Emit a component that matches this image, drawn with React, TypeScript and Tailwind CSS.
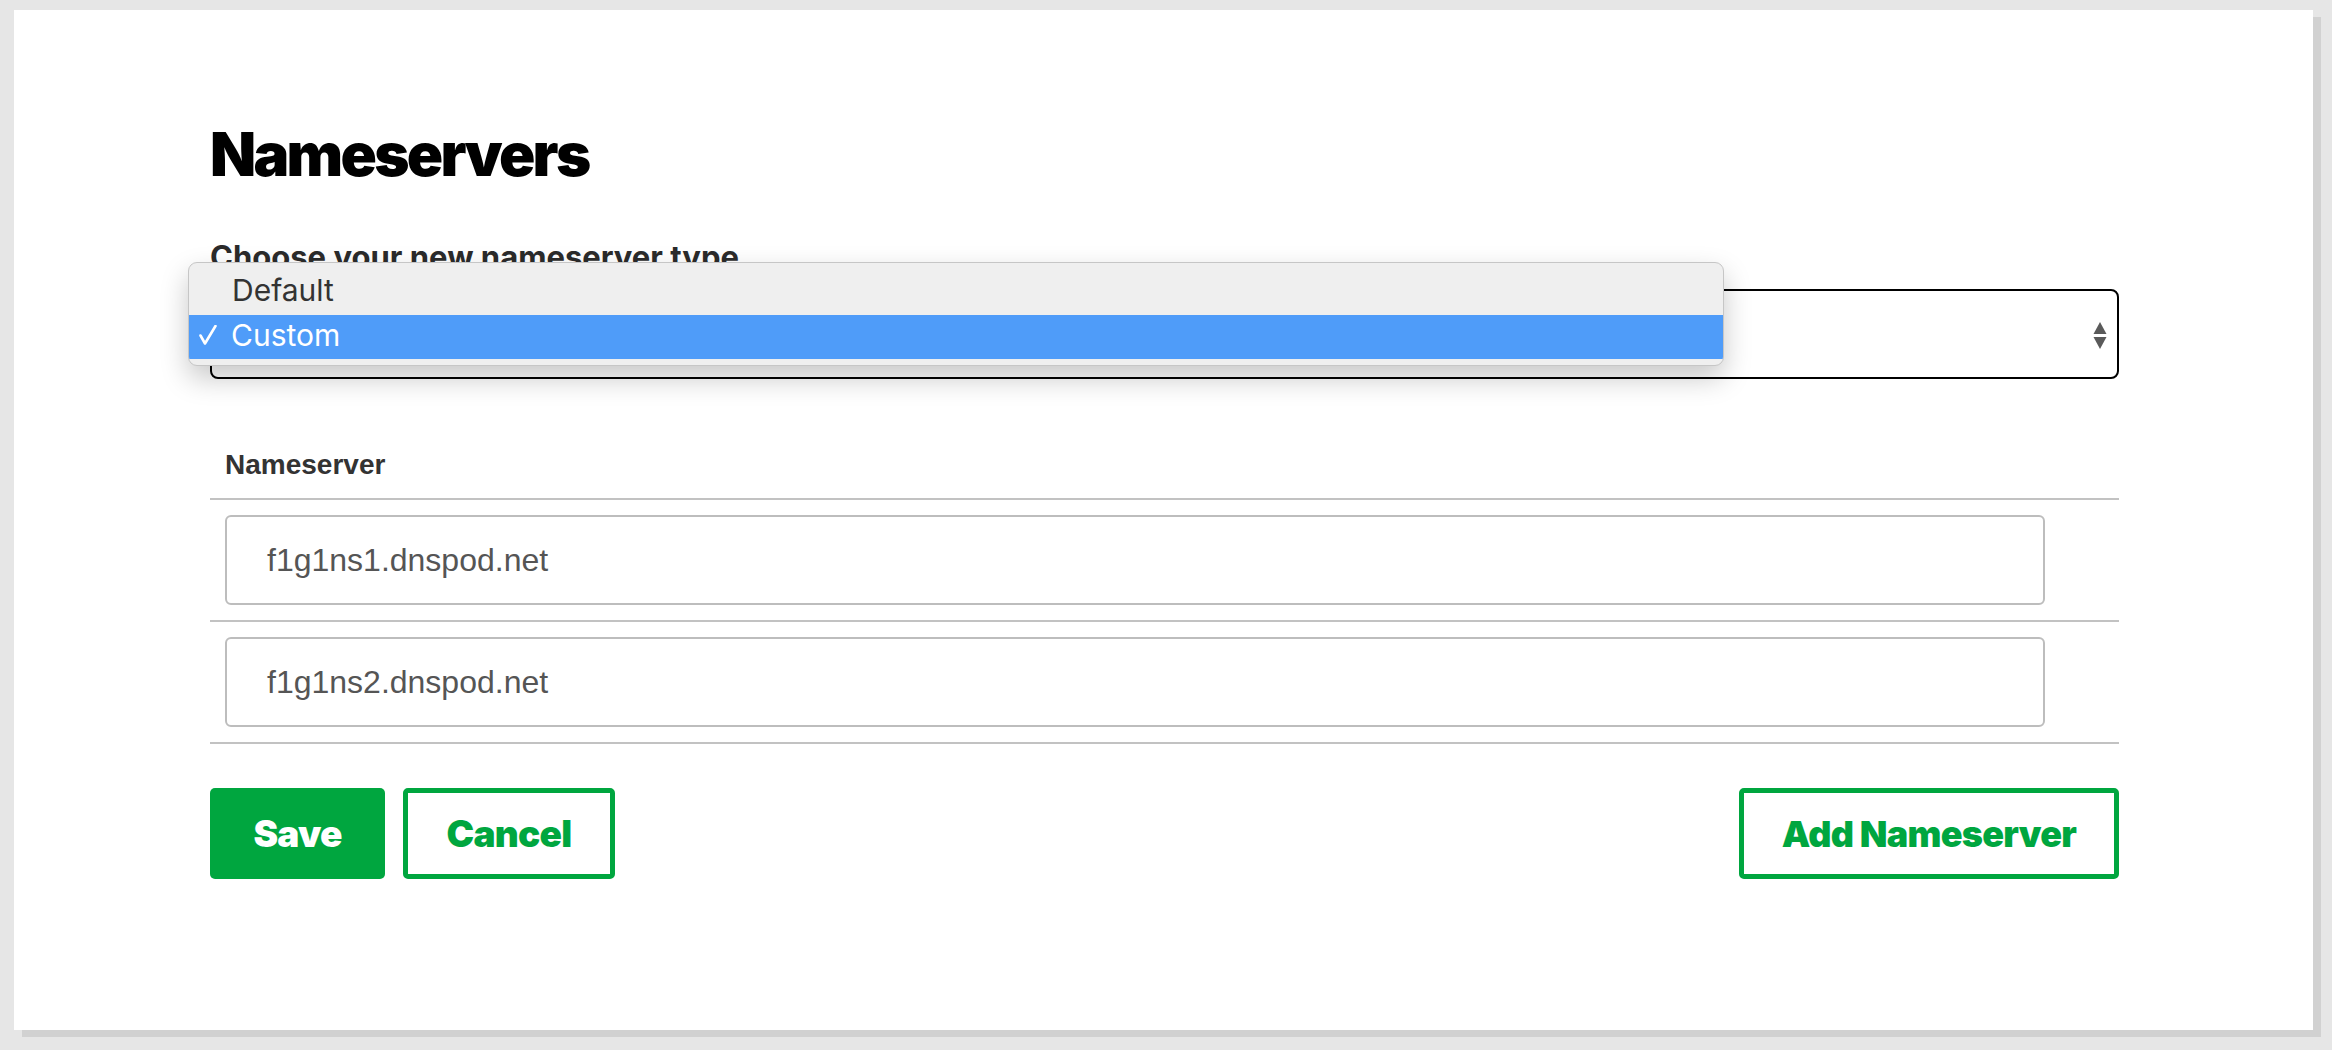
import React from "react";

const sage = { fontFamily: "Inter, 'Noto Sans', sans-serif" };
const helv = { fontFamily: "'Liberation Sans', Arial, sans-serif" };

function SelectArrows() {
  return (
    <svg width="14" height="28" viewBox="0 0 14 28" className="absolute right-[10px] top-[31px]">
      <polygon points="7,0 13.5,12 0.5,12" fill="#5a5a5a" />
      <polygon points="0.5,15 13.5,15 7,27" fill="#5a5a5a" />
    </svg>
  );
}

function CheckMark() {
  return (
    <svg width="18" height="20" viewBox="0 0 18 20" className="ml-[10px] mr-[14px]">
      <path d="M1.5 10.5 L6 18.5 L16.5 1" fill="none" stroke="white" strokeWidth="2.6" strokeLinecap="round" strokeLinejoin="round" />
    </svg>
  );
}

function NameserverRow({ value }: { value: string }) {
  return (
    <div className="py-[15px] pl-[15px] border-b-2 border-[#c2c2c2]">
      <div
        className="w-[1820px] h-[90px] flex items-center pl-[40px] border-2 border-[#bdbdbd] rounded-[6px] text-[32px] text-[#555]"
        style={helv}
      >
        {value}
      </div>
    </div>
  );
}

export default function App() {
  return (
    <div className="min-h-screen w-full bg-[#e6e6e6] pt-[10px] pl-[14px]">
      <div className="relative w-[2299px] h-[1020px] bg-white shadow-[8px_7px_0_#d1d1d1] pl-[196px] pr-[194px] pt-[114px]">
        <h1 className="text-[60px] leading-[60px] font-black tracking-[-0.045em] text-black" style={sage}>
          Nameservers
        </h1>

        <div className="mt-[57px] text-[31px] leading-[31px] font-bold text-[#2b2b2b]" style={sage}>
          Choose your new nameserver type
        </div>

        <div className="relative mt-[17px]">
          <div className="relative h-[90px] border-2 border-black rounded-[8px] flex items-center pl-[30px] text-[29px] text-[#333]" style={helv}>
            Custom
            <SelectArrows />
          </div>

          {/* native select popup */}
          <div
            className="absolute -left-[22px] -top-[27px] w-[1536px] h-[104px] bg-[#efefef] border border-[#c6c6c6] rounded-[9px] shadow-[0_12px_28px_rgba(0,0,0,0.22)] pt-[8px] overflow-hidden text-[30px]"
            style={sage}
          >
            <div className="h-[44px] flex items-center pl-[43px] pb-[5px] text-[#333]">Default</div>
            <div className="h-[44px] flex items-center pb-[4px] bg-[#4f9cf9] text-white">
              <CheckMark />
              <span>Custom</span>
            </div>
          </div>
        </div>

        <div className="mt-[72px] pl-[15px] pb-[19px] border-b-2 border-[#c2c2c2]">
          <div className="text-[28px] leading-[28px] font-bold text-[#333]" style={helv}>
            Nameserver
          </div>
        </div>
        <NameserverRow value="f1g1ns1.dnspod.net" />
        <NameserverRow value="f1g1ns2.dnspod.net" />

        <div className="mt-[44px] flex items-center" style={sage}>
          <button className="w-[175px] h-[91px] bg-[#00a63f] rounded-[5px] text-white text-[37px] font-black tracking-[-0.02em]">
            Save
          </button>
          <button className="ml-[18px] w-[212px] h-[91px] border-[5px] border-[#00a63f] rounded-[5px] text-[#00a63f] text-[37px] font-black tracking-[-0.02em]">
            Cancel
          </button>
          <button className="ml-auto w-[380px] h-[91px] border-[5px] border-[#00a63f] rounded-[5px] text-[#00a63f] text-[36px] font-black tracking-[-0.02em]">
            Add Nameserver
          </button>
        </div>
      </div>
    </div>
  );
}
